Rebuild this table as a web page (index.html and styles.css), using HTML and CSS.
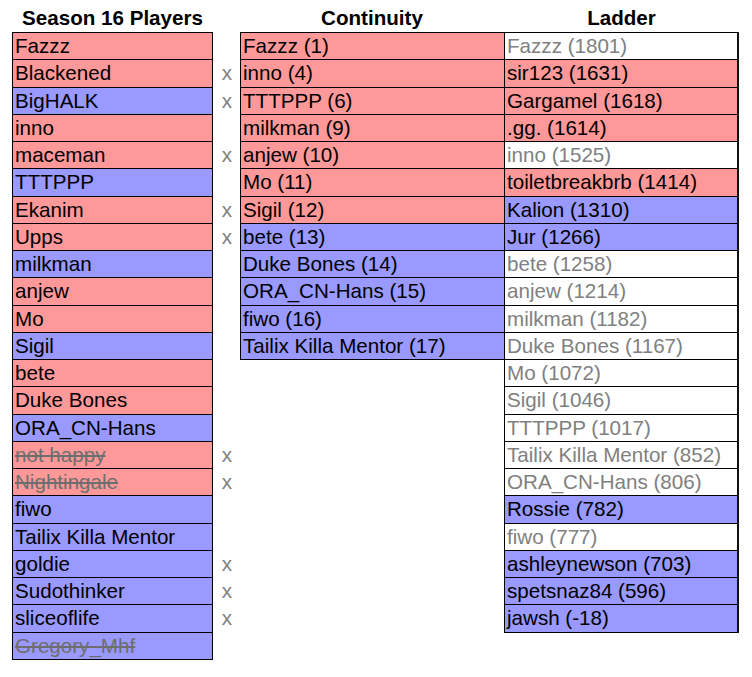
FILE: index.html
```html
<!DOCTYPE html>
<html>
<head>
<meta charset="utf-8">
<link rel="stylesheet" href="styles.css">
</head>
<body>
<div class="sheet">
  <div class="col col-players">
    <div class="head">Season 16 Players</div>
    <div class="list">
      <div class="cell red">Fazzz</div>
      <div class="cell red">Blackened</div>
      <div class="cell blue">BigHALK</div>
      <div class="cell red">inno</div>
      <div class="cell red">maceman</div>
      <div class="cell blue">TTTPPP</div>
      <div class="cell red">Ekanim</div>
      <div class="cell red">Upps</div>
      <div class="cell blue">milkman</div>
      <div class="cell red">anjew</div>
      <div class="cell red">Mo</div>
      <div class="cell blue">Sigil</div>
      <div class="cell red">bete</div>
      <div class="cell red">Duke Bones</div>
      <div class="cell blue">ORA_CN-Hans</div>
      <div class="cell red gone">not happy</div>
      <div class="cell red gone">Nightingale</div>
      <div class="cell blue">fiwo</div>
      <div class="cell blue">Tailix Killa Mentor</div>
      <div class="cell blue">goldie</div>
      <div class="cell blue">Sudothinker</div>
      <div class="cell blue">sliceoflife</div>
      <div class="cell blue gone">Gregory_Mhf</div>
    </div>
  </div>
  <div class="col col-x">
    <div class="head"></div>
    <div class="marks">
      <div class="mark"></div>
      <div class="mark">x</div>
      <div class="mark">x</div>
      <div class="mark"></div>
      <div class="mark">x</div>
      <div class="mark"></div>
      <div class="mark">x</div>
      <div class="mark">x</div>
      <div class="mark"></div>
      <div class="mark"></div>
      <div class="mark"></div>
      <div class="mark"></div>
      <div class="mark"></div>
      <div class="mark"></div>
      <div class="mark"></div>
      <div class="mark">x</div>
      <div class="mark">x</div>
      <div class="mark"></div>
      <div class="mark"></div>
      <div class="mark">x</div>
      <div class="mark">x</div>
      <div class="mark">x</div>
    </div>
  </div>
  <div class="col col-cont">
    <div class="head">Continuity</div>
    <div class="list list-cont">
      <div class="cell red">Fazzz (1)</div>
      <div class="cell red">inno (4)</div>
      <div class="cell red">TTTPPP (6)</div>
      <div class="cell red">milkman (9)</div>
      <div class="cell red">anjew (10)</div>
      <div class="cell red">Mo (11)</div>
      <div class="cell red">Sigil (12)</div>
      <div class="cell blue">bete (13)</div>
      <div class="cell blue">Duke Bones (14)</div>
      <div class="cell blue">ORA_CN-Hans (15)</div>
      <div class="cell blue">fiwo (16)</div>
      <div class="cell blue">Tailix Killa Mentor (17)</div>
    </div>
  </div>
  <div class="col col-ladder">
    <div class="head">Ladder</div>
    <div class="list list-ladder">
      <div class="cell plain">Fazzz (1801)</div>
      <div class="cell red">sir123 (1631)</div>
      <div class="cell red">Gargamel (1618)</div>
      <div class="cell red">.gg. (1614)</div>
      <div class="cell plain">inno (1525)</div>
      <div class="cell red">toiletbreakbrb (1414)</div>
      <div class="cell blue">Kalion (1310)</div>
      <div class="cell blue">Jur (1266)</div>
      <div class="cell plain">bete (1258)</div>
      <div class="cell plain">anjew (1214)</div>
      <div class="cell plain">milkman (1182)</div>
      <div class="cell plain">Duke Bones (1167)</div>
      <div class="cell plain">Mo (1072)</div>
      <div class="cell plain">Sigil (1046)</div>
      <div class="cell plain">TTTPPP (1017)</div>
      <div class="cell plain">Tailix Killa Mentor (852)</div>
      <div class="cell plain">ORA_CN-Hans (806)</div>
      <div class="cell blue">Rossie (782)</div>
      <div class="cell plain">fiwo (777)</div>
      <div class="cell blue">ashleynewson (703)</div>
      <div class="cell blue">spetsnaz84 (596)</div>
      <div class="cell blue">jawsh (-18)</div>
    </div>
  </div>
</div>
</body>
</html>
```
FILE: styles.css
```css
html, body {
  margin: 0;
  padding: 0;
  background: #ffffff;
}

body {
  font-family: "Liberation Sans", Arial, sans-serif;
  font-size: 20.6px;
  color: #000;
}

.sheet {
  display: flex;
  align-items: flex-start;
  padding-left: 12px;
}

.col {
  display: flex;
  flex-direction: column;
}

.col-players { width: 201px; }
.col-x { width: 27px; }
.col-cont { width: 264px; }
.col-ladder { width: 235px; }

.head {
  height: 32px;
  box-sizing: border-box;
  padding-top: 4px;
  line-height: 27px;
  font-weight: bold;
  text-align: center;
  white-space: nowrap;
}

.list {
  border-top: 1px solid #000;
  border-left: 1px solid #000;
  border-right: 1px solid #000;
}

.list-cont {
  border-right: none;
}

.list-ladder {
  border-right: 2px solid #111;
}

.cell {
  height: 27.26px;
  box-sizing: border-box;
  border-bottom: 1px solid #000;
  padding: 0 0 0 2px;
  line-height: 26px;
  white-space: nowrap;
  overflow: hidden;
}

.red { background: #ff9999; }
.blue { background: #9999ff; }
.plain { background: #ffffff; color: #808080; }

.gone {
  color: #6e6e6e;
  text-decoration: line-through;
}

.marks {
  padding-top: 1px;
}

.mark {
  height: 27.26px;
  box-sizing: border-box;
  padding-left: 1px;
  line-height: 26px;
  text-align: center;
  color: #808080;
}
```
